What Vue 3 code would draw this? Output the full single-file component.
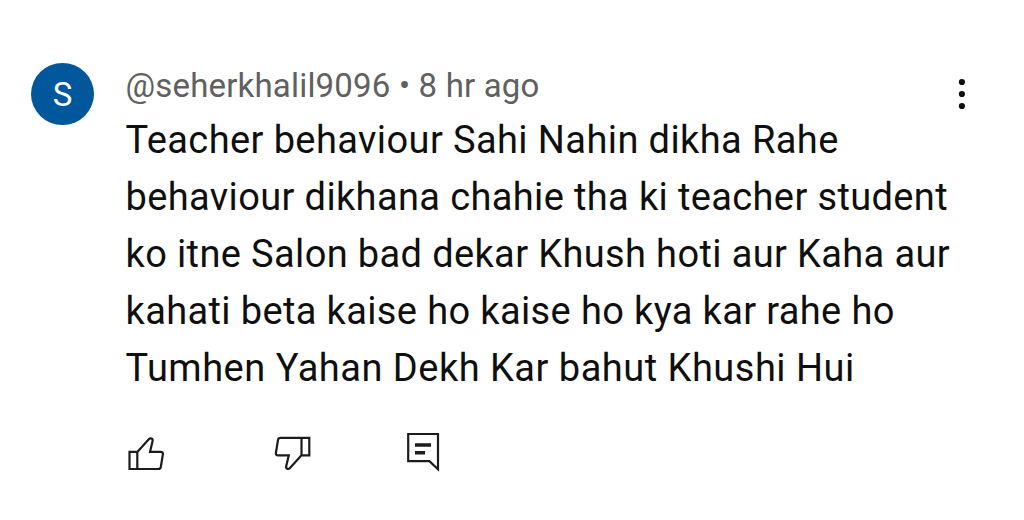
<template>
  <div class="comment">
    <div class="avatar">S</div>
    <div class="main">
      <div class="meta">{{ author }} • {{ time }}</div>
      <div class="body">
        <div v-for="line in lines" :key="line">{{ line }}</div>
      </div>
      <div class="actions">
        <svg width="40" height="40" viewBox="0 0 40 40">
          <path d="M3.5 18.9H11.3V36H3.5ZM11.3 18.9L22.8 6.2C24.4 4.5 27.2 5.5 26.6 8L24 18.9H34.8Q37.3 18.9 36.9 21.2L34.8 34Q34.4 36 32.4 36H11.3" />
        </svg>
        <svg class="dislike" width="40" height="40" viewBox="0 0 40 40">
          <path d="M36.3 22.3H28.5V4.9H36.3ZM28.5 22.3L17 35C15.4 36.7 12.6 35.7 13.2 33.2L15.8 22.3H5Q2.5 22.3 2.9 20L5 6.9Q5.4 4.9 7.4 4.9H28.5" />
        </svg>
        <svg class="reply" width="34" height="40" viewBox="0 0 34 40">
          <path d="M2.2 1H32V36.2L23.4 28.2H2.2Z" />
          <path class="text-lines" d="M9 12H25M9 19.7H19" />
        </svg>
      </div>
    </div>
    <svg class="menu" width="8" height="32" viewBox="0 0 8 32">
      <circle v-for="y in [4, 16, 28]" :key="y" cx="3.9" :cy="y" r="3.1" />
    </svg>
  </div>
</template>

<script setup>
const author = '@seherkhalil9096'
const time = '8 hr ago'
const lines = [
  'Teacher behaviour Sahi Nahin dikha Rahe',
  'behaviour dikhana chahie tha ki teacher student',
  'ko itne Salon bad dekar Khush hoti aur Kaha aur',
  'kahati beta kaise ho kaise ho kya kar rahe ho',
  'Tumhen Yahan Dekh Kar bahut Khushi Hui'
]
</script>

<style>
body {
  background: #fff;
}
</style>

<style scoped>
.comment {
  display: flex;
  box-sizing: border-box;
  width: 1024px;
  height: 520px;
  padding: 63px 0 0 31px;
  font-family: Roboto, sans-serif;
}
.avatar {
  width: 63px;
  height: 62px;
  border-radius: 50%;
  background: #01579b;
  color: #fff;
  font-size: 33px;
  line-height: 63px;
  text-align: center;
}
.main {
  width: 832px;
  margin-left: 31.5px;
}
.meta {
  height: 49px;
  line-height: 46px;
  font-size: 33px;
  letter-spacing: 0.18px;
  color: #606060;
  white-space: nowrap;
}
.body {
  font-size: 38px;
  line-height: 57px;
  letter-spacing: 0.37px;
  color: #0f0f0f;
  white-space: nowrap;
}
.body div:first-child {
  letter-spacing: 0.4px;
}
.body div:last-child {
  letter-spacing: 0.5px;
}
.actions {
  display: flex;
  margin-top: 36px;
}
svg {
  fill: none;
  stroke: #1c1c1c;
  stroke-width: 2.2;
}
.dislike {
  margin-left: 107px;
}
.reply {
  margin-left: 93px;
}
.text-lines {
  stroke-width: 3.4;
}
.menu {
  margin-top: 15px;
  fill: #0f0f0f;
  stroke: none;
}
</style>
